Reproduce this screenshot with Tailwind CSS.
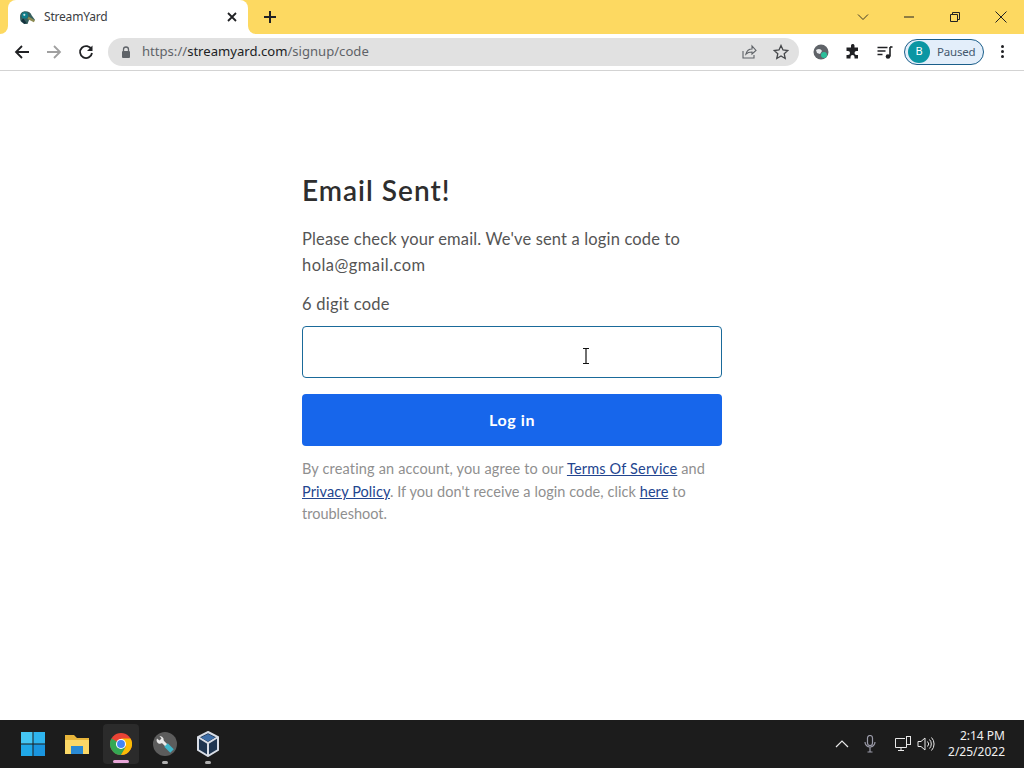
<!DOCTYPE html>
<html lang="en">
<head>
    <meta charset="UTF-8">
    <title>StreamYard</title>
    <script src="https://cdn.jsdelivr.net/npm/@tailwindcss/browser@4"></script>
</head>
<body class="w-[1024px] h-[768px] overflow-hidden bg-white flex flex-col font-['Open_Sans',sans-serif]">
    <!-- Tab strip -->
    <div class="h-[34px] shrink-0 bg-[#fdd961] flex items-end pl-2">
        <div class="relative w-[240px] h-[34px] bg-white rounded-t-lg flex items-center pl-[11px] pr-[8px]">
            <!-- tab flares -->
            <div class="absolute -left-2 bottom-0 w-2 h-2 bg-white"><div class="w-2 h-2 bg-[#fdd961] rounded-br-lg"></div></div>
            <div class="absolute -right-2 bottom-0 w-2 h-2 bg-white"><div class="w-2 h-2 bg-[#fdd961] rounded-bl-lg"></div></div>
            <svg class="w-[17px] h-[17px] shrink-0" viewBox="0 0 16 16">
                <path d="M1 7c0-3 2-5 5-5 3 0 5 1 6 4l3 4-1 1-4-2-2 5H5L2 12C1 11 1 9 1 7z" fill="#37605f"/>
                <circle cx="5.500" cy="6" r="3" fill="#0f7f8c"/>
                <circle cx="5" cy="5.500" r="1" fill="#cfe3e0"/>
                <path d="M9 7l6 3.500-1 2-6-3z" fill="#8d8b52"/>
                <path d="M2 11l3 3 2-1-3-4z" fill="#15323e"/>
            </svg>
            <span class="ml-[8px] text-[12px] text-[#3c4043] font-['Noto_Sans',sans-serif] tracking-[-0.2px]">StreamYard</span>
            <svg class="w-4 h-4 ml-auto" viewBox="0 0 16 16"><path d="M4 4l8 8M12 4l-8 8" stroke="#202124" stroke-width="1.8"/></svg>
        </div>
        <div class="w-[44px] h-[34px] flex items-center justify-center">
            <svg class="w-4 h-4" viewBox="0 0 16 16"><path d="M8 2v12M2 8h12" stroke="#202124" stroke-width="2"/></svg>
        </div>
        <div class="ml-auto flex h-[34px] items-center">
            <div class="w-[46px] flex justify-center"><svg class="w-3 h-3" viewBox="0 0 12 12"><path d="M1 3.500l5 5 5-5" fill="none" stroke="#3d3a2a" stroke-width="1"/></svg></div>
            <div class="w-[46px] flex justify-center"><svg class="w-3 h-3" viewBox="0 0 12 12"><path d="M1 6h10" stroke="#202124" stroke-width="1"/></svg></div>
            <div class="w-[46px] flex justify-center"><svg class="w-3 h-3" viewBox="0 0 12 12"><path d="M1.500 3.500h7v7h-7zM3.500 3.500v-2h7v7h-2" fill="none" stroke="#202124" stroke-width="1"/></svg></div>
            <div class="w-[46px] flex justify-center"><svg class="w-3 h-3" viewBox="0 0 12 12"><path d="M0.500 0.500l11 11M11.500 0.500l-11 11" stroke="#202124" stroke-width="1"/></svg></div>
        </div>
    </div>

    <!-- Toolbar -->
    <div class="h-[37px] shrink-0 bg-white border-b border-[#d3d3d3] flex items-center pl-[6px] pb-[1px]">
        <div class="w-8 flex justify-center"><svg class="w-4 h-4" viewBox="0 0 16 16"><path d="M15 8H2M8 2L2 8l6 6" fill="none" stroke="#202124" stroke-width="1.800"/></svg></div>
        <div class="w-8 flex justify-center"><svg class="w-4 h-4" viewBox="0 0 16 16"><path d="M1 8h13M8 2l6 6-6 6" fill="none" stroke="#a0a0a0" stroke-width="1.800"/></svg></div>
        <div class="w-8 flex justify-center"><svg class="w-4 h-4" viewBox="0 0 16 16"><path d="M13.500 5.500A6 6 0 1 0 14 9" fill="none" stroke="#202124" stroke-width="1.800"/><path d="M14.500 1.500v5.500H9z" fill="#202124"/></svg></div>
        <div class="ml-[6px] w-[691px] h-[28px] bg-[#e1e1e1] rounded-full flex items-center pl-[13px]">
            <svg class="w-[10px] h-[12px]" viewBox="0 0 10 12"><path d="M2.500 5V3.500a2.500 2.500 0 0 1 5 0V5" fill="none" stroke="#5f6368" stroke-width="1.300"/><rect x="1" y="5" width="8" height="7" rx="1" fill="#5f6368"/></svg>
            <span class="ml-[11px] pt-[1px] text-[13.100px] text-[#202124] font-['Noto_Sans',sans-serif]"><span class="text-[#5f6368]">https://</span>streamyard.com<span class="text-[#5f6368]">/signup/code</span></span>
            <svg class="w-4 h-4 ml-auto" viewBox="0 0 16 16"><path d="M2 7v7h11v-3M5 10c1-4 4-5 6-5V2l4 4.500L11 10V8C8 8 6 9 5 10z" fill="none" stroke="#5f6368" stroke-width="1.100"/></svg>
            <svg class="w-4 h-4 ml-4 mr-[10px]" viewBox="0 0 16 16"><path d="M8 1.500l2 4.500 4.800 .5-3.600 3.200 1 4.800L8 12l-4.200 2.500 1-4.800L1.200 6.500 6 6z" fill="none" stroke="#45474a" stroke-width="1.300"/></svg>
        </div>
        <div class="ml-[14px] w-4 flex justify-center">
            <svg class="w-4 h-4" viewBox="0 0 16 16"><circle cx="8" cy="8" r="7.500" fill="#5f6368"/><path d="M3 6c3-2 5-1 6 1l-2 3-3-1z" fill="#e8eaed"/><circle cx="11" cy="11" r="3" fill="#2bbf9b"/></svg>
        </div>
        <div class="ml-[16px] w-4 flex justify-center">
            <svg class="w-4 h-4" viewBox="0 0 16 16"><path d="M6 1.500a1.800 1.800 0 0 1 3.500 0V3.500H13V7h-1.500a2 2 0 0 0 0 4H13v3.500H9.500V13a2 2 0 0 0-4 0v1.500H1.500V11H3a2 2 0 0 0 0-4H1.500V3.500H6z" fill="#202124"/></svg>
        </div>
        <div class="ml-[16px] w-4 flex justify-center">
            <svg class="w-4 h-4" viewBox="0 0 16 16"><path d="M0.500 3.500h10M0.500 7h8M0.500 10.500h5" stroke="#202124" stroke-width="1.400"/><path d="M13 3v9.500" stroke="#202124" stroke-width="1.600"/><circle cx="11" cy="12.500" r="2.300" fill="#202124"/><path d="M13 3h2.500" stroke="#202124" stroke-width="1.600"/></svg>
        </div>
        <div class="ml-[11px] w-[80px] h-[26px] rounded-full border border-[#1a5e8a] bg-[#e3eefa] flex items-center pl-[3px]">
            <div class="w-[22px] h-[22px] rounded-full bg-[#0b96a3] flex items-center justify-center text-[11px] text-white font-['Noto_Sans',sans-serif]">B</div>
            <span class="ml-[7px] text-[11.500px] text-[#44586e] font-['Noto_Sans',sans-serif] tracking-[-0.2px]">Paused</span>
        </div>
        <div class="ml-[17px] w-[4px] flex flex-col gap-[2px]">
            <div class="w-[3px] h-[3px] rounded-full bg-[#202124]"></div>
            <div class="w-[3px] h-[3px] rounded-full bg-[#202124]"></div>
            <div class="w-[3px] h-[3px] rounded-full bg-[#202124]"></div>
        </div>
    </div>

    <!-- Page -->
    <main class="flex-1 flex justify-center font-['Lato',sans-serif]">
        <div class="w-[420px] pt-[99px]">
            <h1 class="text-[28px] leading-[40px] font-semibold text-[#2e2e2e] tracking-[1px]">Email Sent!</h1>
            <p class="mt-[16px] text-[16.500px] leading-[26px] text-[#555555] tracking-[0.16px]">
                <span class="block">Please check your email. We've sent a login code to</span>
                <span class="block tracking-[0.45px]">hola@gmail.com</span>
            </p>
            <label class="block mt-[13px] text-[16.500px] leading-[26px] text-[#555555] tracking-[0.25px]">6 digit code</label>
            <div class="relative mt-[9px] h-[52px] border border-[#1a6a9a] rounded-[4px] bg-white">
                <svg class="absolute left-[279px] top-[21px] w-[8px] h-[16px]" viewBox="0 0 8 16"><path d="M1 .5h6M1 15.500h6M4 .5v15" fill="none" stroke="#111" stroke-width="1.200"/></svg>
            </div>
            <button class="mt-[16px] w-full h-[52px] rounded-[4px] bg-[#1766eb] text-white text-[16px] font-bold tracking-[0.6px]">Log in</button>
            <p class="mt-[12px] text-[14.500px] leading-[22.500px] text-[#8f8f8f]">
                <span class="block tracking-[0.16px]">By creating an account, you agree to our <a class="text-[#23458f] underline">Terms Of Service</a> and</span>
                <span class="block tracking-[0.07px]"><a class="text-[#23458f] underline">Privacy Policy</a>. If you don't receive a login code, click <a class="text-[#23458f] underline">here</a> to</span>
                <span class="block">troubleshoot.</span>
            </p>
        </div>
    </main>

    <!-- Taskbar -->
    <footer class="h-[48px] shrink-0 bg-[#1c1c1c] flex items-center pl-[21px] text-white font-['Noto_Sans',sans-serif]">
        <svg class="w-6 h-6" viewBox="0 0 24 24">
            <path d="M0 0h11.500v11.500H0z" fill="#45c6f4"/><path d="M12.500 0H24v11.500H12.500z" fill="#2eb4ee"/>
            <path d="M0 12.500h11.500V24H0z" fill="#20a8e8"/><path d="M12.500 12.500H24V24H12.500z" fill="#1a95df"/>
        </svg>
        <svg class="ml-[20px] w-6 h-6" viewBox="0 0 24 24">
            <path d="M0 3h9l3 3h12v16H0z" fill="#e8b53a"/><path d="M0 8h24v14H0z" fill="#fbd867"/><path d="M6 14h12v8H6z" fill="#2a8ad4"/>
        </svg>
        <div class="relative ml-[14px] w-[36px] h-[40px] rounded bg-[#2b2b2b] flex items-center justify-center">
            <svg class="w-[22px] h-[22px]" viewBox="0 0 24 24">
                <circle cx="12" cy="12" r="12" fill="#ea4335"/>
                <path d="M12 12L1.600 6A12 12 0 0 0 12 24l5-8z" fill="#34a853"/>
                <path d="M12 6h10.400A12 12 0 0 1 12 24l5.200-9z" fill="#fbbc05"/>
                <circle cx="12" cy="12" r="5.500" fill="#fff"/><circle cx="12" cy="12" r="4.300" fill="#4285f4"/>
            </svg>
            <div class="absolute bottom-[1px] left-[10px] w-[16px] h-[3px] rounded-full bg-[#e8a6d8]"></div>
        </div>
        <div class="relative ml-[14px] w-[24px] h-[24px]">
            <svg class="w-6 h-6" viewBox="0 0 24 24">
                <circle cx="12" cy="12" r="12" fill="#5c5c5c"/>
                <path d="M9 9l6 6" stroke="#e8e8e8" stroke-width="3"/>
                <path d="M10.500 6.500a4 4 0 0 1-5 5A4 4 0 0 1 4 6.500l2.500 2 2-2-2-2.500a4 4 0 0 1 4 2.500z" fill="#e8e8e8"/>
                <path d="M13 13l6 6" stroke="#3fb6c9" stroke-width="5"/>
            </svg>
            <div class="absolute -bottom-[8px] left-[9px] w-[6px] h-[3px] rounded-full bg-[#b0b0b0]"></div>
        </div>
        <div class="relative ml-[19px] w-[24px] h-[26px]">
            <svg class="w-6 h-[26px]" viewBox="0 0 24 26">
                <path d="M12 1l10 5v13l-10 6L2 19V6z" fill="#1f3550" stroke="#d8dde6" stroke-width="2"/>
                <path d="M2 6l10 6 10-6M12 12v13" fill="none" stroke="#d8dde6" stroke-width="2"/>
                <path d="M12 3l7 3.500-7 4-7-4z" fill="#3f6fa8"/>
            </svg>
            <div class="absolute -bottom-[7px] left-[9px] w-[6px] h-[3px] rounded-full bg-[#b0b0b0]"></div>
        </div>

        <svg class="ml-auto w-[14px] h-[14px]" viewBox="0 0 14 14"><path d="M1 10l6-6 6 6" fill="none" stroke="#e8e8e8" stroke-width="1.200"/></svg>
        <svg class="ml-[15px] w-[12px] h-[18px]" viewBox="0 0 12 18"><rect x="3.500" y="0.500" width="5" height="10" rx="2.500" fill="none" stroke="#9a9aa8" stroke-width="1.200"/><path d="M1 7a5 5 0 0 0 10 0M6 12v5M3.500 17h5" fill="none" stroke="#9a9aa8" stroke-width="1.200"/></svg>
        <svg class="ml-[19px] w-[16px] h-[16px]" viewBox="0 0 16 16"><path d="M10 2.500H.5v9h11V9M3 14.500h6M6 11.500v3" fill="none" stroke="#e8e8e8" stroke-width="1"/><rect x="11.500" y=".5" width="4" height="8" fill="none" stroke="#e8e8e8"/></svg>
        <svg class="ml-[6px] w-[18px] h-[16px]" viewBox="0 0 18 16"><path d="M1 5.500h3L8 2v12l-4-3.500H1zM10.500 5.500a3.500 3.500 0 0 1 0 5M12.500 3.500a6.500 6.500 0 0 1 0 9M14.500 1.500a9.500 9.500 0 0 1 0 13" fill="none" stroke="#e8e8e8" stroke-width="1"/></svg>
        <div class="ml-[13px] mr-[19px] text-right text-[12px] leading-[16px] text-[#f0f0f0]">
            <div>2:14 PM</div>
            <div>2/25/2022</div>
        </div>
    </footer>
</body>
</html>
